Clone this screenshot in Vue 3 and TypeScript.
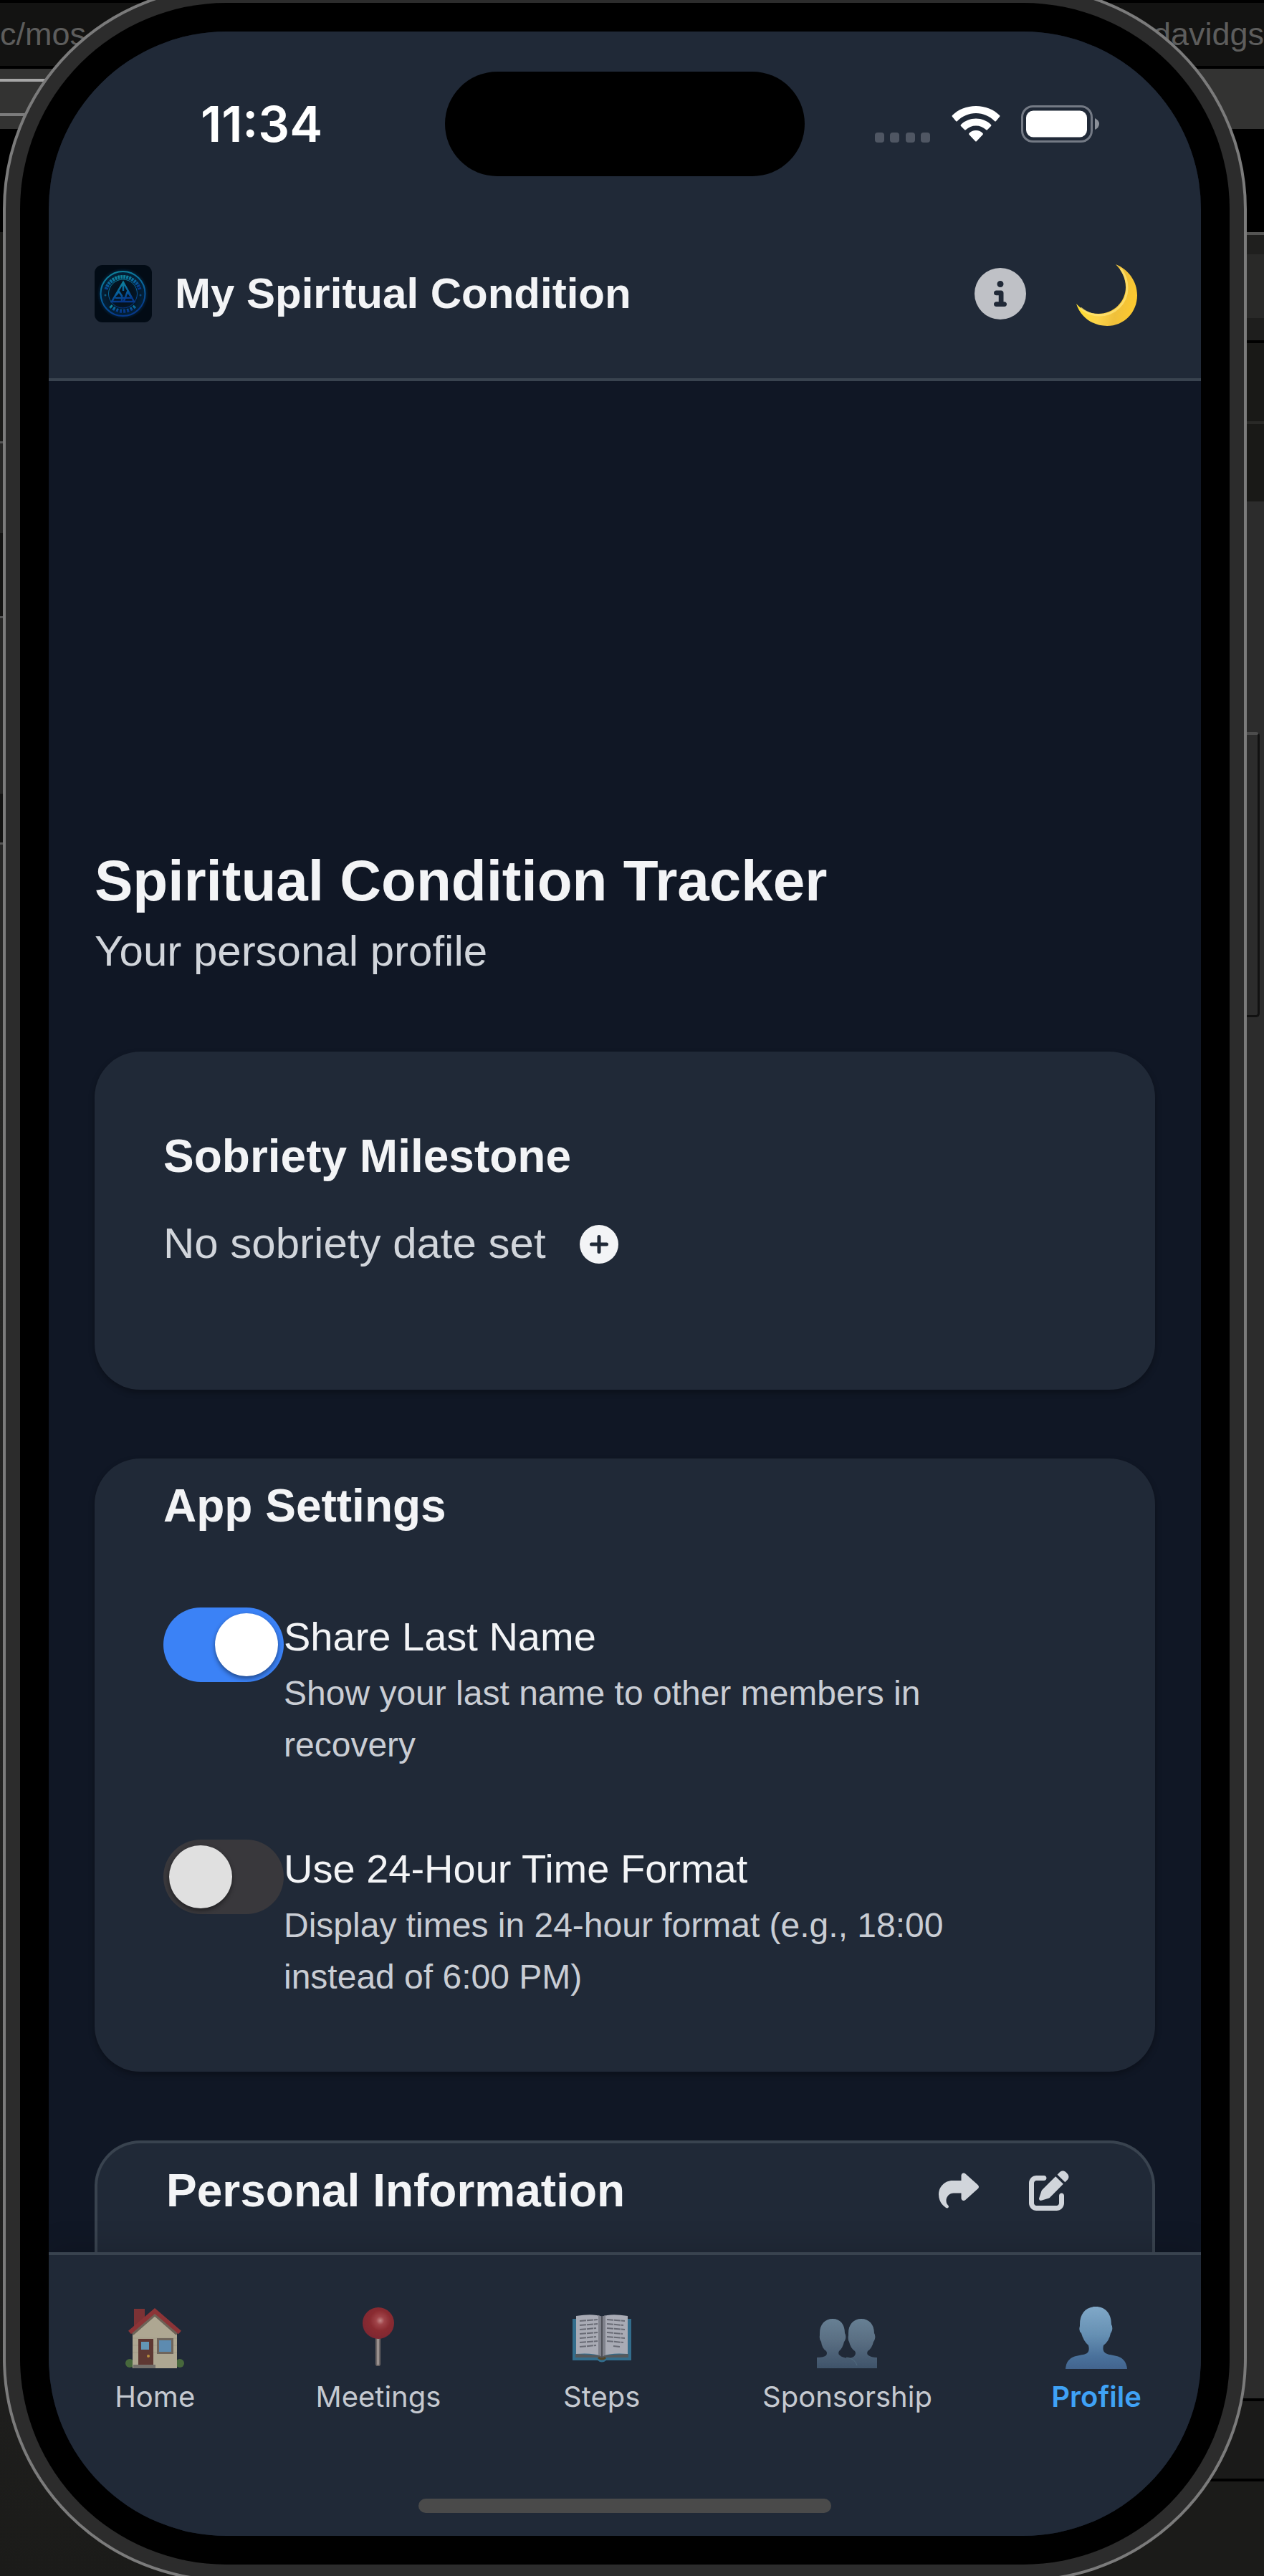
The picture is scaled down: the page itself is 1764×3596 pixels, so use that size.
<script setup lang="ts">
import { ref } from 'vue'

interface Setting {
  id: string
  title: string
  description: string
  enabled: boolean
}

interface Tab {
  id: string
  label: string
}

const settings = ref<Setting[]>([
  {
    id: 'share-last-name',
    title: 'Share Last Name',
    description: 'Show your last name to other members in recovery',
    enabled: true,
  },
  {
    id: 'use-24-hour',
    title: 'Use 24-Hour Time Format',
    description: 'Display times in 24-hour format (e.g., 18:00 instead of 6:00 PM)',
    enabled: false,
  },
])

const tabs: Tab[] = [
  { id: 'home', label: 'Home' },
  { id: 'meetings', label: 'Meetings' },
  { id: 'steps', label: 'Steps' },
  { id: 'sponsorship', label: 'Sponsorship' },
  { id: 'profile', label: 'Profile' },
]

const activeTab = ref('profile')
</script>

<template>
  <div class="desk">
    <div class="backdrop" aria-hidden="true">
      <div class="pane pane-left"><span class="window-title">c/mos</span></div>
      <div class="pane pane-right"><span class="window-title">davidgs</span></div>
    </div>

    <div class="phone">
      <div class="side-button"></div>
      <div class="bezel">
        <div class="screen">
          <div class="status">
            <time class="clock">11:34</time>
            <div class="island"></div>
            <div class="indicators">
              <svg width="78" height="14" viewBox="0 0 78 14" fill="#4f5663" class="signal">
                <rect x="0" width="13" height="14" rx="4" />
                <rect x="21" width="13" height="14" rx="4" />
                <rect x="43" width="13" height="14" rx="4" />
                <rect x="64" width="13" height="14" rx="4" />
              </svg>
              <svg width="68" height="50" viewBox="0 0 68 50" fill="#fff">
                <path d="M34 0C47 0 59 5 67 13Q68 14 67 15L62 21Q61 22 60 21C53 14 44 10 34 10S15 14 8 21Q7 22 6 21L1 15Q0 14 1 13C9 5 21 0 34 0Z" />
                <path d="M34 17.500C42 17.500 49.500 20.500 55 26Q56 27 55 28L50 33Q49 34 48 33C44 29.500 39.500 27.500 34 27.500S24 29.500 20 33Q19 34 18 33L13 28Q12 27 13 26C18.500 20.500 26 17.500 34 17.500Z" />
                <path d="M34 34C38 34 41 35.500 43.500 38Q44.500 39 43.500 40L35 49Q34 50 33 49L24.500 40Q23.500 39 24.500 38C27 35.500 30 34 34 34Z" />
              </svg>
              <svg width="110" height="52" viewBox="0 0 110 52">
                <rect x="1.500" y="1.500" width="97" height="49" rx="15" fill="none" stroke="#747a85" stroke-width="3" />
                <rect x="7" y="7.500" width="85" height="37" rx="10" fill="#fff" />
                <path d="M103 18Q109 21 109 26T103 34Z" fill="#8b9099" />
              </svg>
            </div>
          </div>

          <header class="app-header">
            <svg class="logo" viewBox="0 0 80 80" role="img" aria-label="Spiritual Condition Tracker logo">
              <defs>
                <linearGradient id="neon" x1="0" y1="0" x2="0.300" y2="1">
                  <stop offset="0" stop-color="#108a9b" />
                  <stop offset="0.600" stop-color="#075f9c" />
                  <stop offset="1" stop-color="#06388a" />
                </linearGradient>
                <radialGradient id="halo">
                  <stop offset="0.400" stop-color="#04121f" />
                  <stop offset="0.850" stop-color="#03213a" />
                  <stop offset="1" stop-color="#020b15" />
                </radialGradient>
              </defs>
              <rect width="80" height="80" rx="11" fill="#020b15" />
              <circle cx="39.500" cy="40" r="36" fill="url(#halo)" />
              <g fill="none" stroke="url(#neon)">
                <circle cx="39.500" cy="40" r="31" stroke-width="2" />
                <circle cx="39.500" cy="40" r="20" stroke-width="1" />
                <path d="M16 34A24.500 24.500 0 0 1 63 34" stroke-width="5" stroke-dasharray="3 1" />
                <path d="M22 57A24.500 24.500 0 0 0 57 57" stroke-width="5" stroke-dasharray="3 2" />
                <path d="M40 24L24 51H55ZM40 24V36M30 42L34 37L38 43V51M41 50L46 37L52 46M29 46H52" stroke-width="2.500" />
              </g>
              <circle cx="15" cy="42" r="1.500" fill="#0a5c80" />
              <circle cx="64" cy="42" r="1.500" fill="#0a4880" />
            </svg>
            <span class="app-name">My Spiritual Condition</span>
            <button class="icon-button" type="button" aria-label="About">
              <svg width="72" height="72" viewBox="0 0 512 512" fill="#bfc1c6">
                <path d="M256 512A256 256 0 1 0 256 0a256 256 0 1 0 0 512zM216 336h24V272H216c-13.300 0-24-10.700-24-24s10.700-24 24-24h48c13.300 0 24 10.700 24 24v88h8c13.300 0 24 10.700 24 24s-10.700 24-24 24H216c-13.300 0-24-10.700-24-24s10.700-24 24-24zm40-208a32 32 0 1 1 0 64 32 32 0 1 1 0-64z" />
              </svg>
            </button>
            <button class="icon-button" type="button" aria-label="Toggle dark mode">
              <svg width="88" height="90" viewBox="0 -4 88 90">
                <defs>
                  <linearGradient id="moon" x1="0" y1="0.600" x2="1" y2="0.800">
                    <stop offset="0" stop-color="#ffe02f" />
                    <stop offset="0.400" stop-color="#fdd44a" />
                    <stop offset="0.650" stop-color="#efc03a" />
                    <stop offset="1" stop-color="#ffcb2e" />
                  </linearGradient>
                </defs>
                <path d="M57 0C75 7 87 24 87 43C87 67 69 86 45 86C25 86 8 74 2 55C10 64 21 69 33 69C54 69 71 52 71 32C71 20 66 9 57 0Z" fill="url(#moon)" />
                <path d="M8 61C15 67 23 71 34 71C56 71 73 54 73 33C73 23 70 14 64 6" fill="none" stroke="#ffe578" stroke-width="3" opacity="0.700" />
              </svg>
            </button>
          </header>

          <main class="content">
            <h1>Spiritual Condition Tracker</h1>
            <p class="lead">Your personal profile</p>

            <section class="card milestone">
              <h2>Sobriety Milestone</h2>
              <div class="milestone-row">
                <span>No sobriety date set</span>
                <button class="icon-button" type="button" aria-label="Set sobriety date">
                  <svg width="56" height="56" viewBox="0 0 56 56">
                    <circle cx="28" cy="29" r="27" fill="#f3f4f6" />
                    <path d="M28 18.500V39.500M17.500 29H38.500" stroke="#202937" stroke-width="5" stroke-linecap="round" />
                  </svg>
                </button>
              </div>
            </section>

            <section class="card settings">
              <h2>App Settings</h2>
              <div v-for="s in settings" :key="s.id" class="setting">
                <input :id="s.id" v-model="s.enabled" type="checkbox" role="switch" class="switch" :aria-describedby="s.id + '-hint'" />
                <div class="setting-text">
                  <label :for="s.id">{{ s.title }}</label>
                  <p :id="s.id + '-hint'">{{ s.description }}</p>
                </div>
              </div>
            </section>

            <section class="card personal">
              <h2>Personal Information</h2>
              <button class="icon-button" type="button" aria-label="Share">
                <svg width="56" height="56" viewBox="0 0 512 512" fill="#d1d5db">
                  <path d="M307 34.800c-11.500 5.100-19 16.600-19 29.200v64H176C78.800 128 0 206.800 0 304c0 113.300 81.500 163.900 100.200 174.100c2.500 1.400 5.300 1.900 8.100 1.900c10.900 0 19.700-8.900 19.700-19.700c0-7.500-4.300-14.400-9.800-19.500C108.800 431.900 96 414.400 96 384c0-53 43-96 96-96h96v64c0 12.600 7.400 24.100 19 29.200s25 3 34.400-5.400l160-144c6.700-6.100 10.600-14.700 10.600-23.800s-3.800-17.700-10.600-23.800l-160-144c-9.400-8.500-22.900-10.600-34.400-5.400z" />
                </svg>
              </button>
              <button class="icon-button" type="button" aria-label="Edit">
                <svg width="56" height="56" viewBox="0 0 512 512" fill="#d1d5db">
                  <path d="M471.600 21.700c-21.900-21.900-57.300-21.900-79.200 0L362.300 51.700l97.900 97.900 30.100-30.100c21.900-21.900 21.900-57.300 0-79.200L471.600 21.700zm-299.200 220c-6.100 6.100-10.800 13.600-13.500 21.900l-29.600 88.800c-2.900 8.600-.6 18.100 5.800 24.600s15.900 8.700 24.600 5.800l88.800-29.600c8.200-2.700 15.700-7.400 21.900-13.500L437.700 172.300 339.700 74.300 172.400 241.700zM96 64C43 64 0 107 0 160V416c0 53 43 96 96 96H352c53 0 96-43 96-96V320c0-17.700-14.300-32-32-32s-32 14.300-32 32v96c0 17.700-14.300 32-32 32H96c-17.700 0-32-14.300-32-32V160c0-17.700 14.300-32 32-32h96c17.700 0 32-14.300 32-32s-14.300-32-32-32H96z" />
                </svg>
              </button>
            </section>
          </main>

          <nav class="tab-bar">
            <div class="tabs">
              <a
                v-for="t in tabs"
                :key="t.id"
                class="tab"
                :class="{ active: t.id === activeTab }"
                :href="'#' + t.id"
                @click.prevent="activeTab = t.id"
              >
                <svg v-if="t.id === 'home'" class="tab-icon" viewBox="0 0 88 88">
                  <circle cx="9" cy="79" r="6" fill="#47683c" />
                  <circle cx="79" cy="79" r="6" fill="#47683c" />
                  <rect x="15" y="3" width="15" height="25" fill="#7c3235" />
                  <path d="M44 8L75 36V86H13V36Z" fill="#aea792" />
                  <path d="M13 44H75M13 54H75M13 64H75" stroke="#a39c88" stroke-width="1" />
                  <path d="M44 9L76 37M44 9L12 37" stroke="#6d6257" stroke-width="7" />
                  <path d="M9 36L44 6L79 36" fill="none" stroke="#8c3437" stroke-width="6" />
                  <rect x="21" y="45" width="21" height="37" fill="#5e3833" />
                  <rect x="25" y="49" width="11" height="11" fill="#6396b5" />
                  <circle cx="35" cy="69" r="2" fill="#b98d3c" />
                  <rect x="47" y="44" width="23" height="22" fill="#6f655c" />
                  <rect x="50" y="47" width="17" height="16" fill="#5d8bb0" />
                  <rect x="14" y="81" width="31" height="5" fill="#74706c" />
                </svg>
                <svg v-else-if="t.id === 'meetings'" class="tab-icon" viewBox="0 0 88 88">
                  <defs>
                    <radialGradient id="pin" cx="0.560" cy="0.420" r="0.650">
                      <stop offset="0" stop-color="#c48788" />
                      <stop offset="0.200" stop-color="#a04449" />
                      <stop offset="0.500" stop-color="#8a2b31" />
                      <stop offset="1" stop-color="#7c2632" />
                    </radialGradient>
                  </defs>
                  <rect x="40" y="42" width="7" height="41" rx="3" fill="#6d6767" />
                  <rect x="42" y="44" width="3" height="37" fill="#99918f" />
                  <circle cx="44" cy="23" r="22" fill="url(#pin)" />
                </svg>
                <svg v-else-if="t.id === 'steps'" class="tab-icon" viewBox="0 0 88 88">
                  <path d="M3 17H85V75H50Q44 80 38 75H3Z" fill="#336d8c" />
                  <path d="M7 66L44 68L81 66V71H50Q44 76 38 71H7Z" fill="#56595c" />
                  <path d="M8 13Q32 9 44 14V69Q30 64 8 66ZM80 13Q56 9 44 14V69Q58 64 80 66Z" fill="#a9abb5" />
                  <path d="M39 12L44 14L49 12V67L44 70L39 67Z" fill="#80828c" />
                  <path d="M44 14V72" stroke="#4e5058" stroke-width="2" />
                  <path d="M13 20L38 18M13 26L38 24M13 32L36 30M13 38L38 36M13 44L36 42M13 50L38 48M13 56L36 54M51 18L76 20M51 24L74 26M51 30L76 32M51 36L73 38M51 42L76 44M51 48L74 50M60 55L70 56" stroke="#696b75" stroke-width="2" stroke-dasharray="9 1" />
                  <path d="M39 71Q44 75 49 71" fill="none" stroke="#53462a" stroke-width="3" />
                </svg>
                <svg v-else-if="t.id === 'sponsorship'" class="tab-icon" viewBox="0 0 88 88">
                  <defs>
                    <linearGradient id="pair" x1="0" y1="17" x2="0" y2="87" gradientUnits="userSpaceOnUse">
                      <stop offset="0" stop-color="#678094" />
                      <stop offset="0.400" stop-color="#5b7084" />
                      <stop offset="1" stop-color="#3e5269" />
                    </linearGradient>
                  </defs>
                  <g fill="url(#pair)">
                    <path d="M64 17C75 17 82 25 82 37Q84 40 83 45Q82 48 81 49Q79 58 73 62Q71 66 74 68Q78 71 86 71V86H43V73Q54 71 55 68Q57 65 55 62Q49 58 47 49Q45 46 46 40V37C46 25 53 17 64 17Z" />
                    <path d="M24 17C35 17 41 25 41 37Q43 40 42 45Q41 48 40 49Q38 58 33 62Q31 66 34 68Q37 71 46 72Q57 74 59 86H2V71Q12 71 15 68Q17 65 15 62Q9 58 8 49Q5 46 6 40V37C6 25 13 17 24 17Z" />
                  </g>
                  <path d="M43 71Q55 72 58 82" fill="none" stroke="#526d80" stroke-width="1" />
                </svg>
                <svg v-else class="tab-icon" viewBox="0 0 88 88">
                  <defs>
                    <linearGradient id="bust" x1="0" y1="0" x2="0" y2="1">
                      <stop offset="0" stop-color="#80a8c8" />
                      <stop offset="0.450" stop-color="#6690b3" />
                      <stop offset="0.800" stop-color="#4a719b" />
                      <stop offset="1" stop-color="#42648e" />
                    </linearGradient>
                  </defs>
                  <path d="M43 0C57 0 65 10 65 25Q67 28 66 33Q65 36 64 37Q62 48 54 54Q52 62 57 65C65 70 85 65 87 87H1C3 65 23 70 31 65Q35 62 33 54Q26 48 23 37Q19 34 21 27V25C21 10 29 0 43 0Z" fill="url(#bust)" />
                </svg>
                <span>{{ t.label }}</span>
              </a>
            </div>
            <div class="home-indicator"></div>
          </nav>
        </div>
      </div>
    </div>
  </div>
</template>

<style>
body {
  margin: 0;
  background: #000;
}
</style>

<style scoped>
.desk {
  position: relative;
  overflow: hidden;
  min-height: 100vh;
  font-family: 'Liberation Sans', Arial, sans-serif;
  color: #f3f4f6;
}

/* Dimmed windows behind the device */
.backdrop {
  position: absolute;
  inset: 0;
  display: grid;
  grid-template-columns: 1fr 1fr;
}

.pane {
  display: flex;
  align-items: flex-start;
}

.pane-left {
  background: linear-gradient(
    to bottom,
    #000 4px, #131312 4px 92px, #000 92px 96px, #333332 96px 110px,
    #a6a6a6 110px 114px, #333332 114px 158px, #7c7c7c 158px 162px, #333332 162px 180px,
    #000 180px 324px, #1b1b19 324px 616px, #555 616px 619px, #262625 619px 744px,
    #131312 744px 860px, #555 860px 863px, #262625 863px 1108px, #131312 1108px 1176px,
    #555 1176px 1179px, #262625 1179px 1424px, #20201f 3200px, #1b1b19 100%
  );
}

.pane-right {
  justify-content: flex-end;
  background: linear-gradient(
    to bottom,
    #000 4px, #131312 4px 92px, #000 92px 96px, #333332 96px 180px,
    #000 180px 324px, #545453 324px 328px, #1f1f1e 328px 355px, #292928 355px 444px,
    #1e1e1d 444px 475px, #000 475px 479px, #191917 479px 588px, #292927 588px 592px,
    #191917 592px 700px, #2c2c2c 700px 3348px, #000 3348px 3352px, #1a1a19 3352px 3460px,
    #000 3460px 3464px, #1b1b19 3464px
  );
}

.window-title {
  margin-top: 22px;
  font-size: 45px;
  line-height: 52px;
  color: #5d5d5c;
}

.phone {
  position: relative;
  margin: -20px 24px -8px 4px;
  padding: 20px;
  border: 4px solid #7b7b7b;
  border-radius: 312px;
  background: #2c2c2c;
}

.side-button {
  position: absolute;
  top: 1038px;
  right: -22px;
  box-sizing: border-box;
  width: 18px;
  height: 398px;
  border: solid #111;
  border-width: 0 3px 3px 0;
  border-top: 4px solid #4c4c4c;
  border-radius: 0 5px 5px 0;
  background: #2c2c2c;
}

.bezel {
  padding: 40px;
  border-radius: 288px;
  background: #000;
}

.screen {
  display: flex;
  flex-direction: column;
  overflow: hidden;
  border-radius: 248px;
  background: #101725;
}

.status {
  display: grid;
  grid-template-columns: 1fr 502px 1fr;
  align-items: center;
  padding: 56px 0 46px;
  background: #202937;
}

.clock {
  padding-left: 212px;
  font: 600 69px/80px Inter, sans-serif;
  color: #fff;
}

.island {
  height: 146px;
  border-radius: 73px;
  background: #000;
}

.indicators {
  display: flex;
  align-items: center;
  justify-content: flex-end;
  gap: 29px;
  padding-right: 141px;
}

.signal {
  align-self: flex-end;
}

.app-header {
  display: flex;
  align-items: center;
  height: 236px;
  padding: 0 88px 0 64px;
  border-bottom: 4px solid #39434f;
  background: #202937;
}

.logo {
  width: 80px;
  height: 80px;
  margin-right: 32px;
}

.app-name {
  flex: 1;
  font-size: 60px;
  line-height: 88px;
  font-weight: 700;
}

.app-header .icon-button + .icon-button {
  margin-left: 68px;
}

.icon-button {
  display: flex;
  padding: 0;
  border: 0;
  background: none;
}

.content {
  flex: 1;
  padding: 648px 64px 0;
}

h1,
h2,
p {
  margin: 0;
}

h1 {
  font-size: 80px;
  line-height: 100px;
}

h2 {
  font-size: 64px;
  line-height: 100px;
}

.lead {
  margin: 4px 0 96px;
  font-size: 60px;
  line-height: 88px;
  color: #d1d5db;
}

.card {
  margin-bottom: 96px;
  padding: 16px 96px 96px;
  border-radius: 64px;
  background: #202937;
  box-shadow: 0 4px 8px rgba(0, 0, 0, 0.3);
}

.milestone {
  padding: 96px 96px 160px;
}

.milestone-row {
  display: flex;
  align-items: center;
  gap: 46px;
  margin-top: 28px;
  font-size: 60px;
  line-height: 88px;
  color: #d1d5db;
}

.setting {
  display: flex;
  align-items: flex-start;
  margin-top: 96px;
}

h2 + .setting {
  margin-top: 92px;
}

.switch {
  appearance: none;
  flex: none;
  box-sizing: border-box;
  width: 168px;
  height: 104px;
  margin: 0;
  padding: 8px;
  border-radius: 52px;
  background: #39383c;
}

.switch::before {
  content: '';
  display: block;
  width: 88px;
  height: 88px;
  border-radius: 50%;
  background: #e0e0e0;
  box-shadow: 0 3px 6px rgba(0, 0, 0, 0.45);
}

.switch:checked {
  background: #3b82f6;
}

.switch:checked::before {
  margin-left: auto;
  background: #fff;
}

.setting-text {
  max-width: 1000px;
}

.setting-text label {
  display: block;
  margin-bottom: 2px;
  font-size: 56px;
  line-height: 82px;
}

.setting-text p {
  font-size: 48px;
  line-height: 72px;
  color: #c9cdd4;
}

.personal {
  display: flex;
  align-items: center;
  gap: 70px;
  margin-bottom: 0;
  padding: 16px 116px 36px 96px;
  border: 4px solid #39434f;
  border-bottom: 0;
  border-radius: 64px 64px 0 0;
  box-shadow: none;
}

.personal h2 {
  flex: 1;
}

.tab-bar {
  position: relative;
  padding: 72px 0 32px;
  border-top: 4px solid #39434f;
  background: #202937;
  box-shadow: 0 -4px 40px rgba(0, 0, 0, 0.15);
}

.tabs {
  display: flex;
  justify-content: space-around;
  padding-left: 7px;
}

.tab {
  display: flex;
  flex-direction: column;
  align-items: center;
  gap: 14px;
  min-width: 116px;
  font: 400 40px/48px Inter, sans-serif;
  color: #c5c9d0;
  text-decoration: none;
}

.tab.active {
  font-weight: 600;
  color: #3fa2f6;
}

.tab-icon {
  width: 88px;
  height: 88px;
}

.home-indicator {
  width: 576px;
  height: 20px;
  margin: 118px auto 0;
  border-radius: 10px;
  background: #4a4a4a;
}
</style>
